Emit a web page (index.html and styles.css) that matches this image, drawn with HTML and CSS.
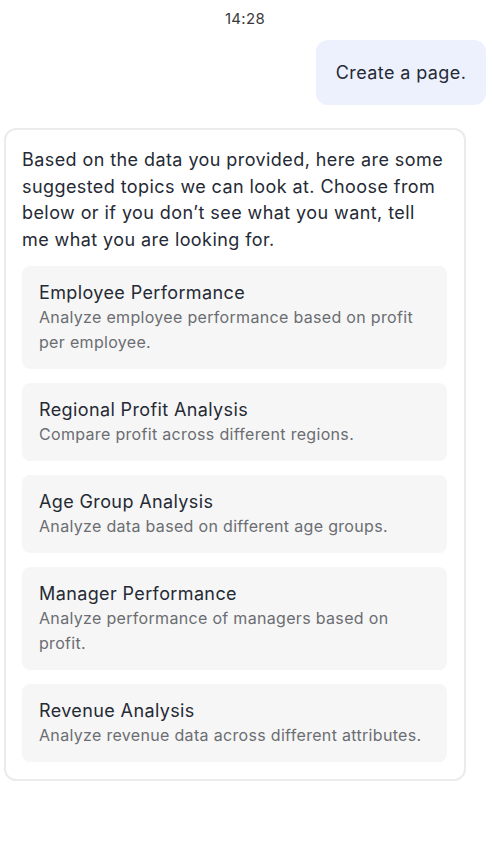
FILE: index.html
```html
<!DOCTYPE html>
<html>
<head>
<meta charset="utf-8">
<link rel="stylesheet" href="styles.css">
</head>
<body>
<div class="screen">
  <div class="time">14:28</div>
  <div class="user-row">
    <div class="bubble">Create a page.</div>
  </div>
  <div class="card">
    <p class="intro">Based on the data you provided, here are some suggested topics we can look at. Choose from below or if you don’t see what you want, tell me what you are looking for.</p>
    <div class="topics">
      <div class="topic">
        <div class="topic-title">Employee Performance</div>
        <div class="topic-desc">Analyze employee performance based on profit per employee.</div>
      </div>
      <div class="topic">
        <div class="topic-title">Regional Profit Analysis</div>
        <div class="topic-desc">Compare profit across different regions.</div>
      </div>
      <div class="topic">
        <div class="topic-title">Age Group Analysis</div>
        <div class="topic-desc">Analyze data based on different age groups.</div>
      </div>
      <div class="topic">
        <div class="topic-title">Manager Performance</div>
        <div class="topic-desc">Analyze performance of managers based on profit.</div>
      </div>
      <div class="topic">
        <div class="topic-title">Revenue Analysis</div>
        <div class="topic-desc">Analyze revenue data across different attributes.</div>
      </div>
    </div>
  </div>
</div>
</body>
</html>
```
FILE: styles.css
```css
* { box-sizing: border-box; }
html, body { margin: 0; padding: 0; background: #ffffff; }
body {
  font-family: Inter, "Noto Sans", "Liberation Sans", sans-serif;
  color: #1f2430;
}
.screen {
  width: 500px;
  padding: 0 14px 0 4px;
}
.time {
  text-align: center;
  font-size: 15px;
  line-height: 20px;
  padding-top: 9px;
  color: #3a3a3a;
  letter-spacing: 0.3px;
}
.user-row {
  display: flex;
  justify-content: flex-end;
  margin-top: 11px;
}
.bubble {
  width: 170px;
  height: 65px;
  display: flex;
  align-items: center;
  justify-content: center;
  background: #edf1fd;
  border-radius: 12px;
  font-size: 18px;
  letter-spacing: 0.4px;
  color: #252a35;
}
.card {
  margin-top: 23px;
  width: 462px;
  border: 2px solid #ebebeb;
  border-radius: 12px;
  padding: 17px 17px 17px 16px;
}
.intro {
  margin: 0;
  font-size: 18px;
  line-height: 26.5px;
  letter-spacing: 0.42px;
  color: #252a35;
  padding-right: 2px;
}
.topics {
  margin-top: 13px;
  display: flex;
  flex-direction: column;
  gap: 14px;
}
.topic {
  background: #f6f6f6;
  border-radius: 8px;
  padding: 15px 17px 14px 17px;
}
.topic-title {
  font-size: 18px;
  line-height: 24px;
  letter-spacing: 0.38px;
  color: #252a35;
}
.topic-desc {
  font-size: 16px;
  line-height: 25px;
  letter-spacing: 0.32px;
  color: #6b6d72;
}
```
